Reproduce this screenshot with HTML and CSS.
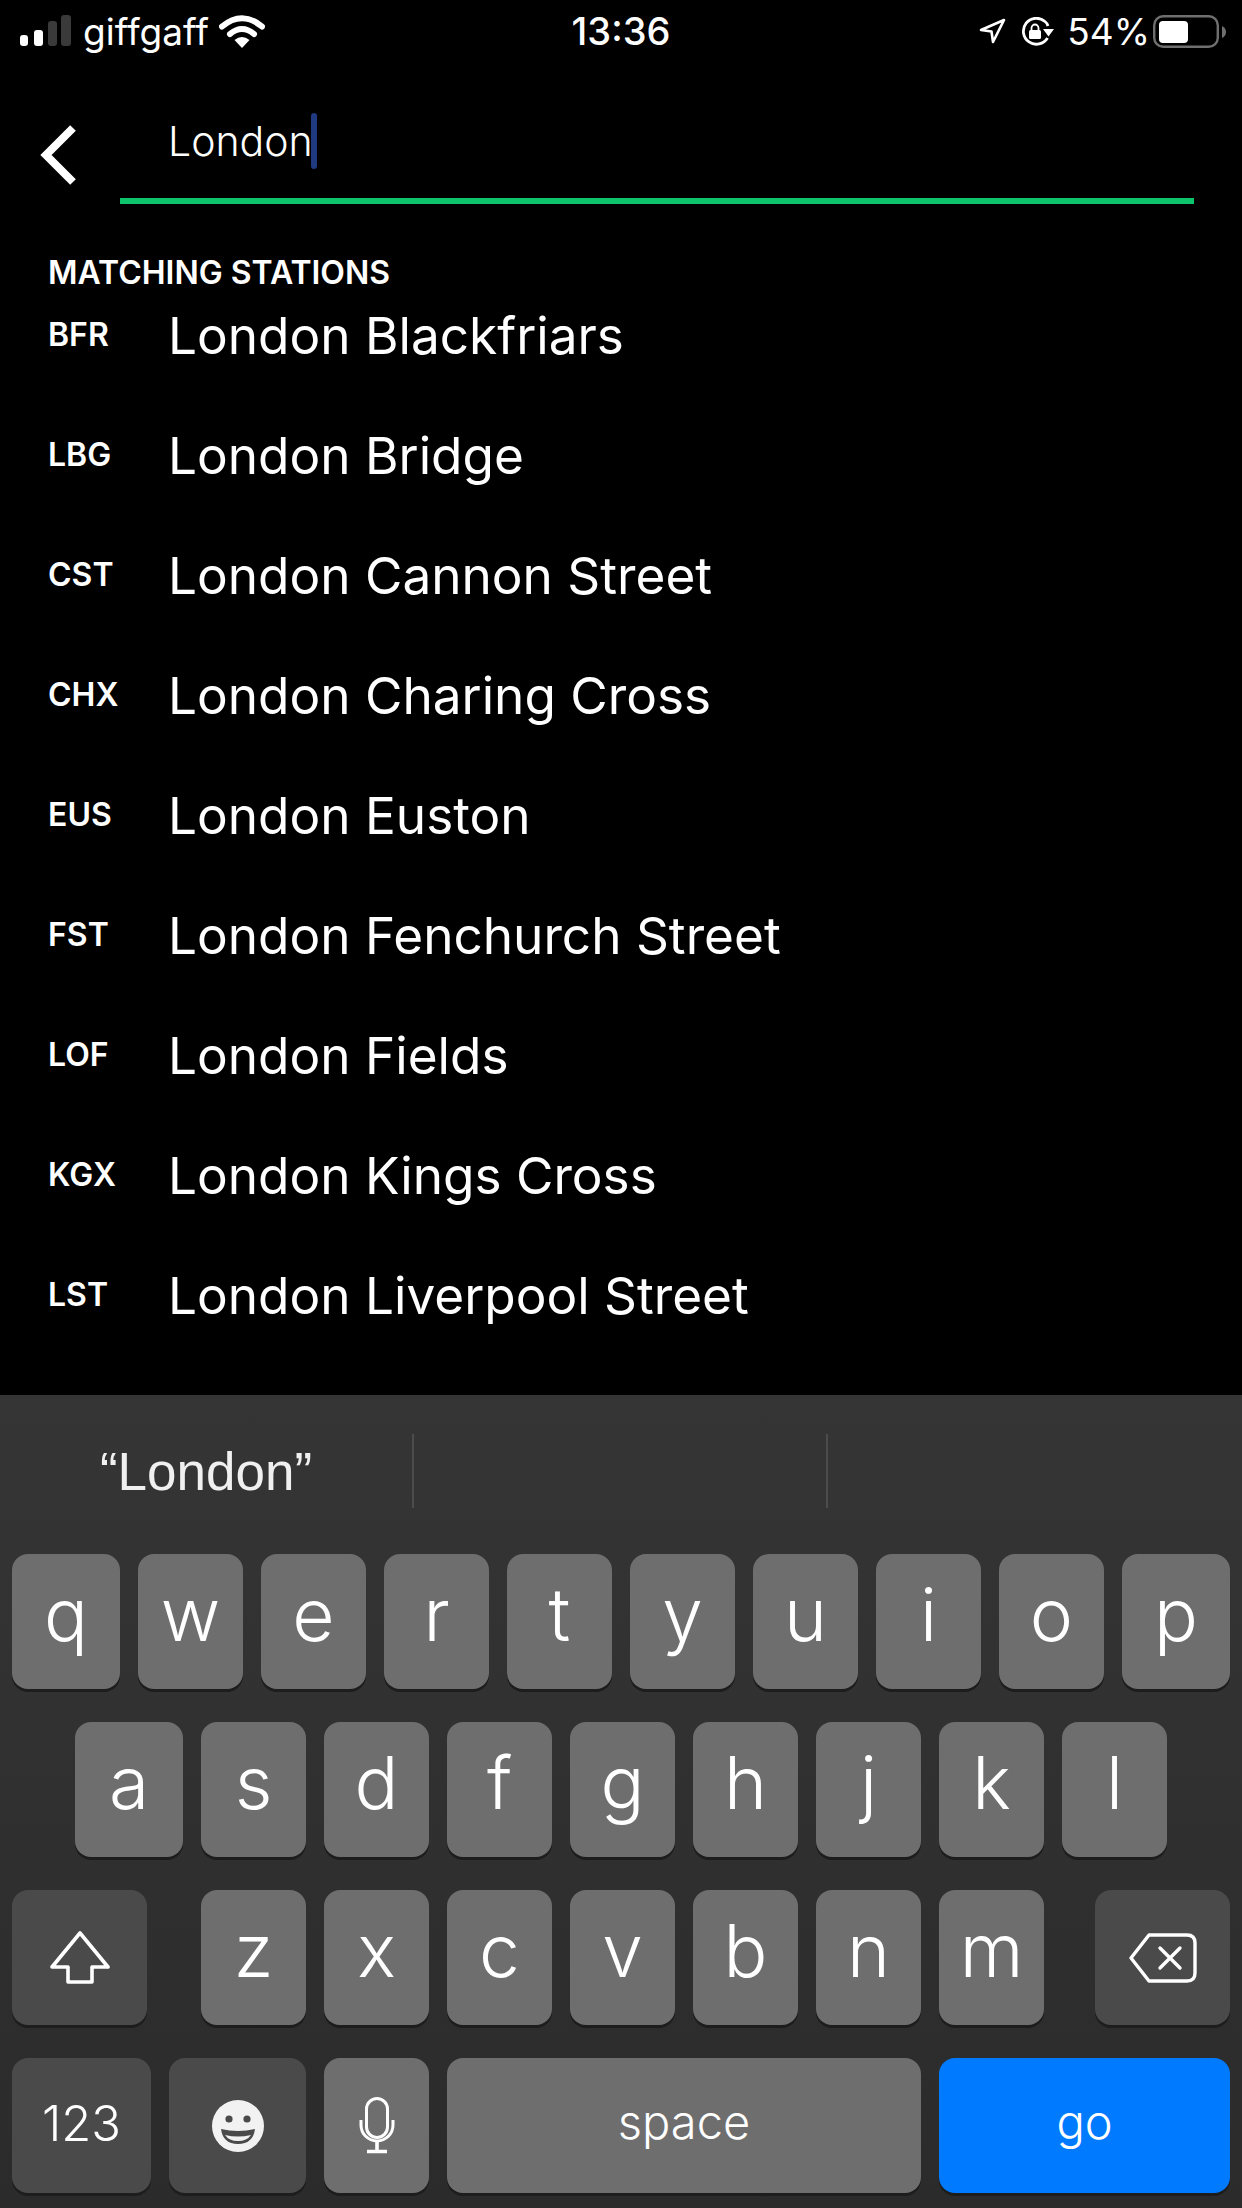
FILE: index.html
```html
<!DOCTYPE html>
<html>
<head>
  <meta charset="utf-8">
  <title>Station search</title>
  <link rel="stylesheet" href="styles.css">
</head>
<body>
<div class="page">
  <div class="status">
    <div class="status_left">
      <svg class="signal" width="52" height="32" viewBox="0 0 52 32">
        <rect x="0" y="20" width="8" height="11" rx="3" fill="#fff"/>
        <rect x="14" y="15" width="9" height="16" rx="3" fill="#fff"/>
        <rect x="28" y="6" width="9" height="25" rx="3" fill="#3a3a3a"/>
        <rect x="41" y="0" width="10" height="31" rx="3" fill="#3a3a3a"/>
      </svg>
      <span class="carrier">giffgaff</span>
      <svg class="wifi" width="46" height="33" viewBox="0 0 46 33">
        <path d="M3 11.5 Q23 -5 43 11.5" fill="none" stroke="#fff" stroke-width="6" stroke-linecap="round"/>
        <path d="M11 19 Q23 9 35 19" fill="none" stroke="#fff" stroke-width="6" stroke-linecap="round"/>
        <path d="M15.5 25 Q23 19 30.5 25 L23 33 Z" fill="#fff"/>
      </svg>
    </div>
    <div class="status_time">13:36</div>
    <div class="status_right">
      <svg width="27" height="26" viewBox="0 0 27 26">
        <path d="M2 12 L25 2 L14 24 L12.5 13.5 Z" fill="none" stroke="#fff" stroke-width="2.6" stroke-linejoin="round"/>
      </svg>
      <svg class="rotate" width="33" height="29" viewBox="0 0 33 29">
        <path d="M26.5 21 A13 13 0 1 1 24 4.5 Q26 6 27 9" fill="none" stroke="#fff" stroke-width="2.8"/>
        <path d="M22 12 L33 12 L27.5 19.5 Z" fill="#fff"/>
        <rect x="8" y="13" width="12" height="9" rx="1.5" fill="#fff"/>
        <path d="M10.5 13 V11 A3.5 3.5 0 0 1 17.5 11 V13" fill="none" stroke="#fff" stroke-width="1.8"/>
      </svg>
      <span class="percent">54%</span>
      <svg class="battery" width="73" height="33" viewBox="0 0 73 33">
        <rect x="1.2" y="1.2" width="63.6" height="30.6" rx="9" fill="none" stroke="#6f6f6f" stroke-width="2.4"/>
        <rect x="6" y="6" width="29" height="22" rx="4" fill="#fff"/>
        <path d="M69 11 Q73 13 73 17 Q73 21 69 23 Z" fill="#6f6f6f"/>
      </svg>
    </div>
  </div>

  <div class="search">
    <div class="back">
      <svg width="38" height="64" viewBox="0 0 38 64">
        <path d="M34 5 L7 32 L34 59" fill="none" stroke="#fff" stroke-width="8"/>
      </svg>
    </div>
    <div class="search_box"><span class="search_text">London</span><span class="caret"></span></div>
  </div>

  <div class="section_title">MATCHING STATIONS</div>
  <div class="stations">
    <div class="station"><span class="code">BFR</span><span class="name">London Blackfriars</span></div>
    <div class="station"><span class="code">LBG</span><span class="name">London Bridge</span></div>
    <div class="station"><span class="code">CST</span><span class="name">London Cannon Street</span></div>
    <div class="station"><span class="code">CHX</span><span class="name">London Charing Cross</span></div>
    <div class="station"><span class="code">EUS</span><span class="name">London Euston</span></div>
    <div class="station"><span class="code">FST</span><span class="name">London Fenchurch Street</span></div>
    <div class="station"><span class="code">LOF</span><span class="name">London Fields</span></div>
    <div class="station"><span class="code">KGX</span><span class="name">London Kings Cross</span></div>
    <div class="station"><span class="code">LST</span><span class="name">London Liverpool Street</span></div>
  </div>

  <div class="keyboard">
    <div class="suggestions">
      <div class="suggestion first">“London”</div>
      <div class="suggestion middle"></div>
      <div class="suggestion"></div>
    </div>
    <div class="key_rows">
      <div class="key_row">
        <div class="key edge">q</div>
        <div class="key">w</div>
        <div class="key">e</div>
        <div class="key">r</div>
        <div class="key">t</div>
        <div class="key">y</div>
        <div class="key">u</div>
        <div class="key">i</div>
        <div class="key">o</div>
        <div class="key edge">p</div>
      </div>
      <div class="key_row row_two">
        <div class="key edge">a</div>
        <div class="key">s</div>
        <div class="key">d</div>
        <div class="key">f</div>
        <div class="key">g</div>
        <div class="key">h</div>
        <div class="key">j</div>
        <div class="key">k</div>
        <div class="key">l</div>
      </div>
      <div class="key_row">
        <div class="key dark shift icon">
          <svg width="60" height="53" viewBox="0 0 60 53">
            <path d="M30 2 L58 36 H42 V51 H18 V36 H2 Z" fill="none" stroke="#fff" stroke-width="3.6" stroke-linejoin="round"/>
          </svg>
        </div>
        <div class="key after_shift">z</div>
        <div class="key">x</div>
        <div class="key">c</div>
        <div class="key">v</div>
        <div class="key">b</div>
        <div class="key">n</div>
        <div class="key">m</div>
        <div class="key dark delete icon">
          <svg width="68" height="50" viewBox="0 0 68 50">
            <path d="M20 2 H58 Q66 2 66 10 V40 Q66 48 58 48 H20 L2 25 Z" fill="none" stroke="#fff" stroke-width="3.4" stroke-linejoin="round"/>
            <path d="M31 15 L51 35 M51 15 L31 35" fill="none" stroke="#fff" stroke-width="3.4" stroke-linecap="round"/>
          </svg>
        </div>
      </div>
      <div class="key_row">
        <div class="key dark numbers small">123</div>
        <div class="key dark emoji icon">
          <svg width="52" height="52" viewBox="0 0 52 52">
            <circle cx="26" cy="26" r="26" fill="#f2f2f2"/>
            <circle cx="17" cy="19" r="3.6" fill="#4a4a4a"/>
            <circle cx="35" cy="19" r="3.6" fill="#4a4a4a"/>
            <path d="M9 29 Q26 33 43 29 Q41 44 26 44 Q11 44 9 29 Z" fill="#4a4a4a"/>
            <path d="M13 35 Q26 38 39 35 Q35 41 26 41 Q17 41 13 35 Z" fill="#f2f2f2"/>
          </svg>
        </div>
        <div class="key icon">
          <svg width="36" height="57" viewBox="0 0 36 57">
            <rect x="7.5" y="1.5" width="21" height="39" rx="10.5" fill="none" stroke="#fff" stroke-width="3"/>
            <path d="M2 23 V28 A16 16 0 0 0 34 28 V23" fill="none" stroke="#fff" stroke-width="3"/>
            <path d="M18 44 V53 M8 54.5 H28" fill="none" stroke="#fff" stroke-width="3.6"/>
          </svg>
        </div>
        <div class="key space small">space</div>
        <div class="key go small">go</div>
      </div>
    </div>
  </div>
</div>
</body>
</html>
```

FILE: styles.css
```css
html, body {
  margin: 0;
  padding: 0;
  background: #000;
}

.page {
  width: 1242px;
  height: 2208px;
  display: flex;
  flex-direction: column;
  background: #000;
  color: #fff;
  font-family: Inter, "Liberation Sans", sans-serif;
  overflow: hidden;
}

/* status bar */
.status {
  height: 62px;
  display: flex;
  align-items: center;
  flex-shrink: 0;
}
.status_left {
  width: 400px;
  display: flex;
  align-items: center;
  padding-left: 20px;
  box-sizing: border-box;
}
.carrier {
  font-size: 37px;
  font-weight: 400;
  margin-left: 11px;
  width: 122px;
}
.wifi { margin-left: 14px; }
.status_time {
  width: 442px;
  text-align: center;
  font-size: 38px;
  font-weight: 500;
}
.status_right {
  flex: 1;
  display: flex;
  align-items: center;
  justify-content: flex-end;
  padding-right: 16px;
}
.rotate { margin-left: 15px; }
.percent {
  font-size: 37px;
  margin-left: 13px;
  margin-right: 3px;
}

/* search row */
.search {
  display: flex;
  height: 142px;
  flex-shrink: 0;
}
.back {
  width: 120px;
  padding: 61px 0 0 39px;
  box-sizing: border-box;
}
.search_box {
  width: 1074px;
  height: 142px;
  box-sizing: border-box;
  border-bottom: 6px solid #0dc46b;
  display: flex;
  align-items: flex-start;
  padding: 51px 0 0 48px;
}
.search_text {
  font-size: 41px;
  font-weight: 300;
  line-height: 56px;
}
.caret {
  width: 6px;
  height: 56px;
  margin-left: -2px;
  border-radius: 3px;
  background: #1f3a80;
}

/* results */
.section_title {
  font-size: 32px;
  font-weight: 600;
  line-height: 40px;
  height: 40px;
  padding: 49px 0 0 48px;
  flex-shrink: 0;
}
.stations {
  flex: 1;
  margin-top: -18px;
}
.station {
  height: 120px;
  display: flex;
  align-items: center;
}
.code {
  width: 120px;
  padding-left: 48px;
  box-sizing: border-box;
  font-size: 32px;
  font-weight: 600;
  padding-bottom: 2px;
}
.name {
  margin-left: 48px;
  font-size: 51.3px;
  font-weight: 400;
}

/* keyboard */
.keyboard {
  height: 813px;
  flex-shrink: 0;
  background: linear-gradient(#353535, #2b2b2b);
}
.suggestions {
  height: 159px;
  display: flex;
}
.suggestion {
  height: 74px;
  margin-top: 39px;
  line-height: 76px;
  flex: 1;
  text-align: center;
  color: #f0f0f0;
  font-family: "Liberation Sans", sans-serif;
  font-size: 53px;
}
.suggestion.first {
  width: 412px;
  flex: none;
}
.suggestion.middle {
  width: 416px;
  flex: none;
  border-left: 2px solid #4c4c4c;
  border-right: 2px solid #4c4c4c;
  box-sizing: border-box;
}
.key_rows {
  display: flex;
  flex-direction: column;
  gap: 33px;
  padding: 0 12px;
}
.key_row {
  display: flex;
  gap: 18px;
}
.row_two { padding-left: 63px; }
.key {
  width: 105px;
  height: 135px;
  flex-shrink: 0;
  display: flex;
  align-items: center;
  justify-content: center;
  border-radius: 16px;
  background: #6e6e6e;
  box-shadow: 0 3px 0 #1d1d1d;
  font-size: 73px;
  font-weight: 300;
  line-height: 1;
  padding-bottom: 15px;
  box-sizing: border-box;
}
.key.edge { width: 108px; }
.key.dark { background: #4a4a4a; }
.key.icon { padding-bottom: 0; }
.key.shift { width: 135px; }
.key.after_shift { margin-left: 36px; }
.key.delete { width: 135px; margin-left: 33px; }
.key.numbers { width: 139px; }
.key.emoji { width: 137px; }
.key.space { width: 474px; }
.key.go { width: 291px; background: #007aff; }
.key.small { font-size: 47px; font-weight: 300; padding-bottom: 8px; }
.key.numbers.small { font-size: 49px; padding-bottom: 4px; }
```
